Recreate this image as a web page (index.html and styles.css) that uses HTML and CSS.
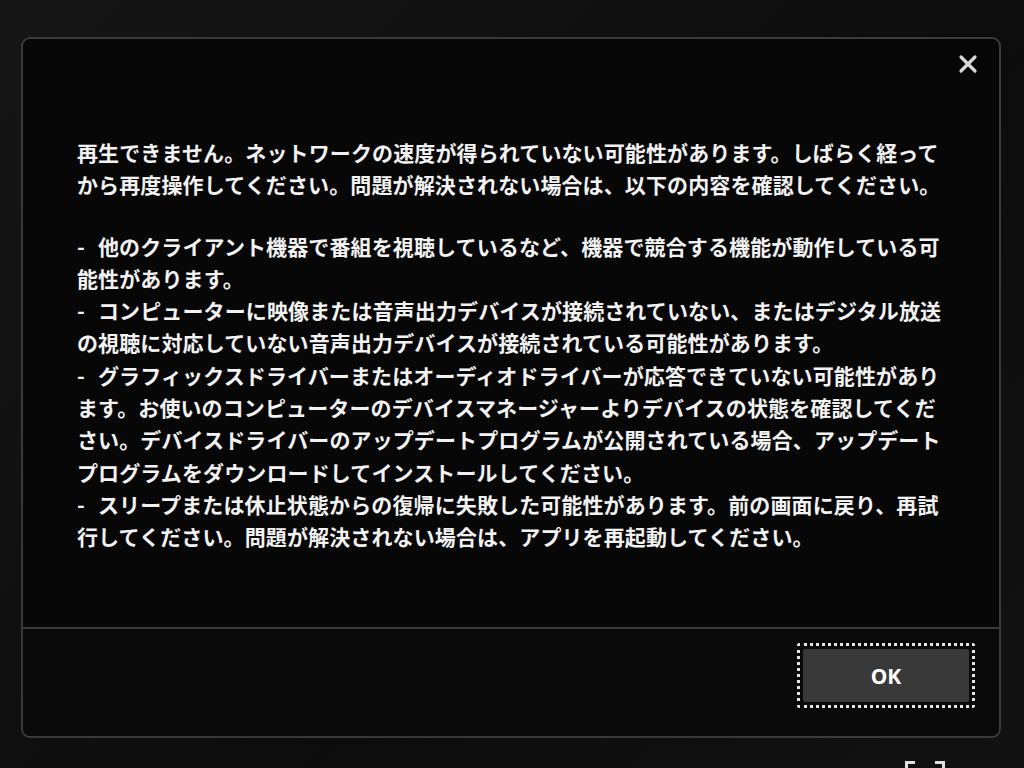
FILE: index.html
```html
<!DOCTYPE html>
<html lang="ja">
<head>
    <meta charset="UTF-8">
    <meta name="viewport" content="width=device-width, initial-scale=1.0">
    <title>再生エラー</title>
    <link rel="stylesheet" href="styles.css">
</head>
<body>
    <div class="dialog">
        <button class="close-btn" aria-label="閉じる">
            <svg width="20" height="20" viewBox="0 0 20 20">
                <path d="M3 3 L17 17 M17 3 L3 17" stroke="#d8d8d8" stroke-width="3.2" stroke-linecap="round"/>
            </svg>
        </button>

        <div class="dialog-body">
            <p class="message">
                再生できません。ネットワークの速度が得られていない可能性があります。しばらく経って<br>
                から再度操作してください。問題が解決されない場合は、以下の内容を確認してください。
            </p>

            <ul class="checklist">
                <li><span class="dash">-</span>他のクライアント機器で番組を視聴しているなど、機器で競合する機能が動作している可<br>能性があります。</li>
                <li><span class="dash">-</span>コンピューターに映像または音声出力デバイスが接続されていない、またはデジタル放送<br>の視聴に対応していない音声出力デバイスが接続されている可能性があります。</li>
                <li><span class="dash">-</span>グラフィックスドライバーまたはオーディオドライバーが応答できていない可能性があり<br>ます。お使いのコンピューターのデバイスマネージャーよりデバイスの状態を確認してくだ<br>さい。デバイスドライバーのアップデートプログラムが公開されている場合、アップデート<br>プログラムをダウンロードしてインストールしてください。</li>
                <li><span class="dash">-</span>スリープまたは休止状態からの復帰に失敗した可能性があります。前の画面に戻り、再試<br>行してください。問題が解決されない場合は、アプリを再起動してください。</li>
            </ul>
        </div>

        <div class="dialog-footer">
            <div class="focus-ring">
                <button class="ok-btn">OK</button>
            </div>
        </div>
    </div>

    <!-- 画面下の全画面アイコン -->
    <div class="fullscreen-icon">
        <span class="corner left"></span>
        <span class="corner right"></span>
    </div>
</body>
</html>
```

FILE: styles.css
```css
* {
    margin: 0;
    padding: 0;
    box-sizing: border-box;
}

body {
    font-family: 'Noto Sans CJK JP', 'Noto Sans', sans-serif;
    background: linear-gradient(135deg, #161616 0%, #0c0c0c 60%, #121212 100%);
    color: #f2f2f2;
    width: 1024px;
    height: 768px;
    overflow: hidden;
    padding: 37px 0 0 21px;
    position: relative;
}

.dialog {
    position: relative;
    width: 980px;
    height: 701px;
    background: #070707;
    border: 2px solid #3a3a3a;
    border-radius: 9px;
    display: flex;
    flex-direction: column;
}

.close-btn {
    position: absolute;
    top: 13px;
    right: 19px;
    width: 24px;
    height: 24px;
    background: none;
    border: none;
    display: flex;
    align-items: center;
    justify-content: center;
}

.dialog-body {
    height: 590px;
    padding: 97px 40px 0 54px;
    border-bottom: 2px solid #3a3a3a;
    font-size: 21px;
    font-weight: bold;
    line-height: 32.3px;
    letter-spacing: 0.12px;
    white-space: nowrap;
}

.message {
    margin-bottom: 29px;
}

.checklist {
    list-style: none;
}

.dash {
    display: inline-block;
    width: 21px;
}

.dialog-footer {
    flex: 1;
    display: flex;
    justify-content: flex-end;
    align-items: flex-start;
    padding: 14px 24px 0 0;
    background: #090909;
    border-radius: 0 0 8px 8px;
}

.focus-ring {
    border: 3px dotted #e6e6e6;
    border-radius: 3px;
    padding: 3px;
}

.ok-btn {
    display: block;
    width: 166px;
    height: 53px;
    background: #393939;
    border: none;
    border-radius: 2px;
    color: #ffffff;
    font-family: 'Noto Sans', sans-serif;
    font-size: 21px;
    font-weight: bold;
}

.fullscreen-icon {
    position: absolute;
    left: 905px;
    top: 761px;
    width: 40px;
    height: 14px;
}

.corner {
    position: absolute;
    top: 0;
    width: 10px;
    height: 14px;
    border-top: 3px solid #e0e0e0;
}

.corner.left {
    left: 0;
    border-left: 3px solid #e0e0e0;
}

.corner.right {
    right: 0;
    border-right: 3px solid #e0e0e0;
}
```
